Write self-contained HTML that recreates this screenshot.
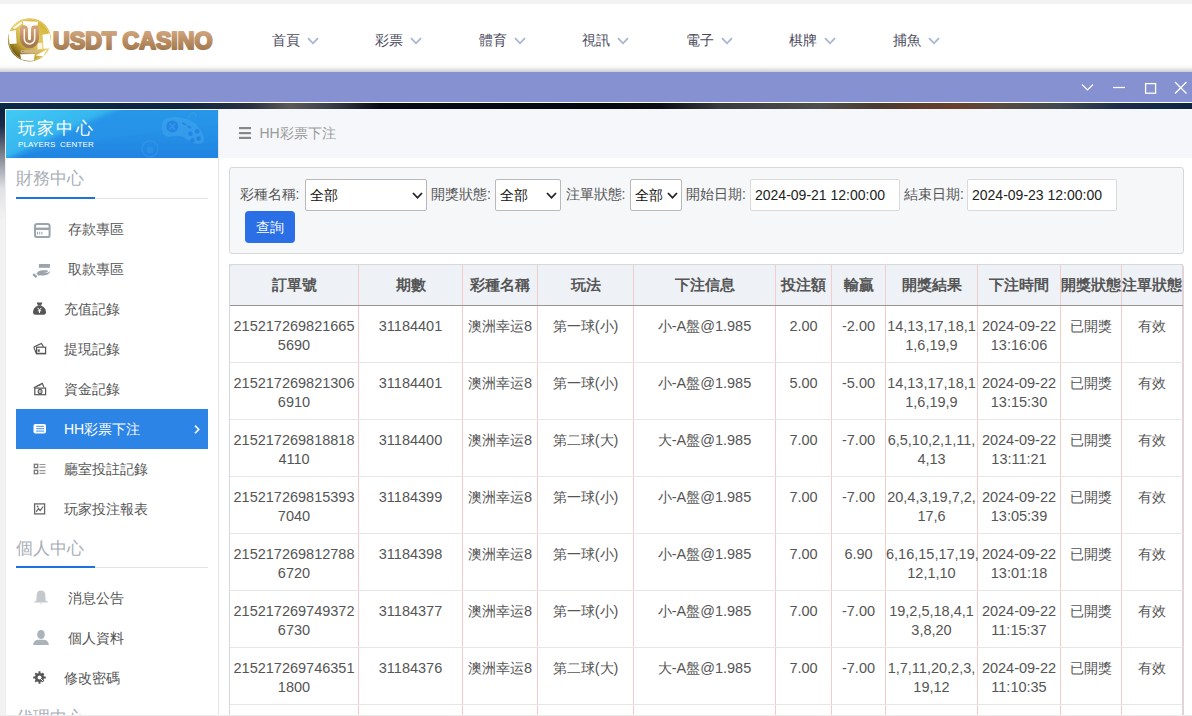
<!DOCTYPE html>
<html><head><meta charset="utf-8">
<style>
*{box-sizing:border-box}
html,body{margin:0;padding:0}
body{width:1192px;height:716px;overflow:hidden;position:relative;background:#fff;font-family:"Liberation Sans",sans-serif;color:#555}
.a{position:absolute}
#topstrip{left:0;top:0;width:1192px;height:4px;background:#f3f3f3}
#header{left:0;top:4px;width:1192px;height:62px;background:#fff}
#hshadow{left:0;top:65px;width:1192px;height:7px;background:linear-gradient(#fff 0%,#f7f7f7 35%,#e2e2e2 65%,#cfcfcd 100%)}
#pbar{left:0;top:72px;width:1192px;height:30px;background:#8591d0}
#wline{left:0;top:101.5px;width:1192px;height:1.5px;background:#fff}
#dstrip{left:0;top:103px;width:1192px;height:6px;background:linear-gradient(90deg,#0b2a48 0px,#0e2640 180px,#2a3040 250px,#5a5a58 290px,#3a4048 330px,#060b16 380px,#04080f 600px,#0a0e14 660px,#383a3c 720px,#4e4e4c 820px,#4a3a32 880px,#5e3c2e 920px,#684030 960px,#584a40 1000px,#404850 1060px,#1e2c4a 1120px,#0c2440 1192px)}
.nav{top:32.4px;font-size:14px;color:#4a4a5e;white-space:nowrap}
.nav svg{position:absolute;left:35px;top:4.6px}
#leftbg{left:0;top:109px;width:5px;height:607px;background:linear-gradient(#0c2440 0px,#182a48 16px,#6a7282 40px,#a8acb6 60px,#e2e2e6 80px,#f2f2f2 110px,#f2f2f2 100%)}
#panel{left:5px;top:109px;width:214px;height:607px;background:#fff;border-left:1px solid #eee;border-top:1px solid #f4f4f4;border-right:1px solid #e6e6e6}
#phead{left:6px;top:110px;width:212px;height:48px;background:linear-gradient(180deg,#2796e8 0%,#2590e6 50%,#2084e2 100%);overflow:hidden}
.sec{left:16px;font-size:17px;color:#a8aeb6;white-space:nowrap}
.secline{left:16px;width:192px;height:1px;background:#e3e3e3}
.secblue{left:16px;width:79px;height:2px;background:#1a73e0}
.mi{font-size:14px;color:#555;white-space:nowrap}
.ico{position:absolute}
#rtop{left:219px;top:109px;width:973px;height:49px;background:#f5f7fa}
#filter{left:229px;top:167px;width:955px;height:87px;background:#f6f7f9;border:1px solid #d5d8dc;border-radius:3px}
.lbl{font-size:14px;color:#555;white-space:nowrap;top:186px}
.sel{top:179px;height:32px;background:#fff;border:1px solid #b9b9b9;border-radius:2px;font-size:14px;color:#111}
.sel span{position:absolute;left:4px;top:7px}
.sel svg{position:absolute;top:12px}
.inp{top:179px;height:32px;background:#fff;border:1px solid #dadada;border-radius:2px;font-size:14px;color:#222}
.inp span{position:absolute;left:4px;top:7px}
#btn{left:245px;top:211px;width:50px;height:32px;background:#2a6fe6;border-radius:4px;color:#fff;font-size:14px;text-align:center;line-height:32px}
#tbl{left:229px;top:264px;width:954px;border-collapse:collapse;table-layout:fixed;border-left:1px solid #c9ced6;border-top:1px solid #dfe3e8;border-radius:4px 4px 0 0}
#tbl th{height:41px;background:#eef2f6;font-size:15px;font-weight:bold;color:#555;border-right:1px solid #f3cccc;border-bottom:1px solid #9b9292;padding:0;white-space:nowrap;text-align:center}
#tbl td .c{font-size:14px}
#tbl td{height:57px;font-size:14.5px;color:#555;border-right:1px solid #f3cccc;border-bottom:1px solid #e6e6e6;padding:0;text-align:center;vertical-align:top;line-height:19px;padding-top:11px;white-space:nowrap}
</style></head><body>
<div id="topstrip" class="a"></div>
<div id="header" class="a"></div>
<div id="hshadow" class="a"></div>
<div id="pbar" class="a"></div>
<div id="wline" class="a"></div>
<div id="dstrip" class="a"></div>

<!-- logo -->
<svg class="a" style="left:0;top:0" width="230" height="70" viewBox="0 0 230 70">
<defs>
<linearGradient id="tg" x1="0" y1="0" x2="0" y2="1"><stop offset="0" stop-color="#d9ad84"/><stop offset="1" stop-color="#9a7046"/></linearGradient>
<linearGradient id="ug" x1="0" y1="0" x2="0" y2="1"><stop offset="0" stop-color="#d2a47c"/><stop offset="1" stop-color="#a47850"/></linearGradient>
<linearGradient id="gold" x1="0.85" y1="0.1" x2="0.15" y2="0.9"><stop offset="0" stop-color="#d4b232"/><stop offset="0.45" stop-color="#e4cc68"/><stop offset="0.7" stop-color="#c8a838"/><stop offset="1" stop-color="#5e4608"/></linearGradient>
</defs>
<circle cx="29.5" cy="39.8" r="21.6" fill="url(#gold)"/>
<circle cx="29.5" cy="39.8" r="20.6" fill="none" stroke="#f4e6a8" stroke-width="0.6" opacity="0.8"/>
<path d="M22.8 21 L38.2 21.7 L37.5 25.4 L28.1 26.4 L23.4 25 Z" fill="#fff"/>
<path d="M12.7 28.1 L21.4 21.4 L22.4 23.4 L14.7 29.1 Z" fill="#fff" opacity="0.9"/>
<path d="M9 31.4 L15.7 30.1 L16.7 43.5 L9.7 44.1 Q8.3 37.5 9 31.4 Z" fill="#fff"/>
<path d="M20.1 54.2 L34.8 53.9 L33.8 60.2 Q27.5 61.5 21.4 59.6 Z" fill="#fff"/>
<path d="M35.5 55.5 L46.9 49.5 L43.5 56.2 Z" fill="#fff"/>
<path d="M42.5 34.8 L49.6 33.4 Q51.3 40.5 50.9 48.2 L43.5 48.8 Z" fill="#fff"/>
<path d="M37.5 43.5 L42.2 42.8 L42.5 48.8 L37.5 49.5 Z" fill="#fff" opacity="0.8"/>
<rect x="27" y="24" width="5" height="16" rx="2" fill="#fffaf0"/>
<path d="M24 29.5 V38.7 A5.5 5.5 0 0 0 35 38.7 V29.5" fill="none" stroke="url(#ug)" stroke-width="8" stroke-linecap="round"/>
<path d="M24.3 29.5 V38.7 A5.2 5.2 0 0 0 34.7 38.7 V29.5" fill="none" stroke="#fff6ea" stroke-width="1.5" stroke-linecap="round"/>
<text x="29.5" y="53.2" font-size="5" fill="#f4ece4" stroke="#caa890" stroke-width="0.35" text-anchor="middle" font-family="Liberation Sans" textLength="17.5" lengthAdjust="spacingAndGlyphs">casino</text>
<text x="53" y="48.8" font-family="Liberation Sans" font-weight="bold" font-size="23.2" fill="url(#tg)" stroke="url(#tg)" stroke-width="2.1" stroke-linejoin="round" textLength="159.5" lengthAdjust="spacingAndGlyphs">USDT CASINO</text>
</svg>
<!-- nav -->
<div class="a nav" style="left:271.5px">首頁<svg width="12" height="8" viewBox="0 0 12 8"><path d="M1 1.2 L6 6.3 L11 1.2" fill="none" stroke="#a9b3d3" stroke-width="1.8"/></svg></div>
<div class="a nav" style="left:375px">彩票<svg width="12" height="8" viewBox="0 0 12 8"><path d="M1 1.2 L6 6.3 L11 1.2" fill="none" stroke="#a9b3d3" stroke-width="1.8"/></svg></div>
<div class="a nav" style="left:478.5px">體育<svg width="12" height="8" viewBox="0 0 12 8"><path d="M1 1.2 L6 6.3 L11 1.2" fill="none" stroke="#a9b3d3" stroke-width="1.8"/></svg></div>
<div class="a nav" style="left:582px">視訊<svg width="12" height="8" viewBox="0 0 12 8"><path d="M1 1.2 L6 6.3 L11 1.2" fill="none" stroke="#a9b3d3" stroke-width="1.8"/></svg></div>
<div class="a nav" style="left:685.5px">電子<svg width="12" height="8" viewBox="0 0 12 8"><path d="M1 1.2 L6 6.3 L11 1.2" fill="none" stroke="#a9b3d3" stroke-width="1.8"/></svg></div>
<div class="a nav" style="left:789px">棋牌<svg width="12" height="8" viewBox="0 0 12 8"><path d="M1 1.2 L6 6.3 L11 1.2" fill="none" stroke="#a9b3d3" stroke-width="1.8"/></svg></div>
<div class="a nav" style="left:892.5px">捕魚<svg width="12" height="8" viewBox="0 0 12 8"><path d="M1 1.2 L6 6.3 L11 1.2" fill="none" stroke="#a9b3d3" stroke-width="1.8"/></svg></div>

<!-- window controls -->
<svg class="a" style="left:1070px;top:76px" width="122" height="24" viewBox="0 0 122 24">
<path d="M12 8.5 L17.5 14 L23 8.5" fill="none" stroke="#fff" stroke-width="1.2"/>
<path d="M43 11.5 H55" stroke="#fff" stroke-width="1.3"/>
<rect x="75.6" y="7.6" width="10" height="9.6" fill="none" stroke="#fff" stroke-width="1.3"/>
<path d="M105 6 L116.5 17.5 M116.5 6 L105 17.5" stroke="#fff" stroke-width="1.3"/>
</svg>

<!-- left -->
<div id="leftbg" class="a"></div>
<div id="panel" class="a"></div>
<div id="phead" class="a">
<svg class="a" style="left:0;top:0" width="212" height="48" viewBox="6 110 212 48">
<defs><filter id="bl" x="-20%" y="-20%" width="140%" height="140%"><feGaussianBlur stdDeviation="2.5"/></filter><linearGradient id="cy" x1="0" y1="0" x2="1" y2="1"><stop offset="0" stop-color="#44cff4"/><stop offset="0.6" stop-color="#32aeee"/><stop offset="1" stop-color="#2a9cea"/></linearGradient></defs><path d="M0 104 L128 104 Q62 133 0 163 Z" fill="url(#cy)" filter="url(#bl)"/><path d="M124 110 L218 110 L218 125 Q170 126 6 158 Q60 135 124 110 Z" fill="#2898ea" opacity="0.35"/>
<path d="M161.7 128.4 Q162 119.5 166 118.6 Q171 116.5 175.3 117 Q182 117.5 187.4 119.3 Q194 122 198 126.9 Q203 132 204 138.2 Q204 143.5 201 143.5 Q197 144 192.7 142.7 Q188 140 182.9 136.7 Q176 135 169.3 136.7 Q165 136.5 163.2 133.7 Z" fill="#48aaf0" opacity="0.45"/>
<circle cx="172.3" cy="126.5" r="6" fill="#1e7ee2" opacity="0.75"/>
<path d="M169.5 123.5 L175 129.5 M175 123.5 L169.5 129.5" stroke="#3c9cee" stroke-width="1.6" opacity="0.7"/>
<path d="M182.1 122.7 L185.9 125 M187.4 126.1 L191.2 128" stroke="#1e7ee2" stroke-width="1.8" opacity="0.8"/>
<circle cx="190.4" cy="133.7" r="2.3" fill="#1e7ee2" opacity="0.75"/>
<circle cx="197.2" cy="131.4" r="2.3" fill="#1e7ee2" opacity="0.75"/>
<circle cx="192.3" cy="140.5" r="2.3" fill="#1e7ee2" opacity="0.75"/>
<circle cx="198.7" cy="138.6" r="2.3" fill="#1e7ee2" opacity="0.75"/>
<path d="M188.2 117.8 Q190 113 194.2 112.8 Q196 114 195.7 117" fill="none" stroke="#48aaf0" stroke-width="1" opacity="0.5"/>
<circle cx="150" cy="148.8" r="8" fill="none" stroke="#40a4ee" stroke-width="1.6" opacity="0.35"/>
<circle cx="150" cy="150" r="3.5" fill="#40a4ee" opacity="0.3"/>
</svg>
</div>
<div class="a" style="left:18px;top:117px;font-size:16.8px;letter-spacing:2.2px;color:#fff;white-space:nowrap">玩家中心</div>
<div class="a" style="left:18px;top:139.5px;font-size:8px;color:#fff;white-space:nowrap;letter-spacing:0.15px">PLAYERS&nbsp; CENTER</div>

<div class="a sec" style="top:167px">財務中心</div>
<div class="a secline" style="top:198px"></div>
<div class="a secblue" style="top:197px"></div>

<div class="a mi" style="left:68px;top:221px">存款專區</div>
<div class="a mi" style="left:68px;top:261px">取款專區</div>
<div class="a mi" style="left:64px;top:301px">充值記錄</div>
<div class="a mi" style="left:64px;top:341px">提現記錄</div>
<div class="a mi" style="left:64px;top:381px">資金記錄</div>
<div class="a" style="left:16px;top:409px;width:192px;height:40px;background:#2b84e6"></div>
<div class="a mi" style="left:64px;top:421px;color:#fff">HH彩票下注</div>
<div class="a mi" style="left:64px;top:461px">廳室投註記錄</div>
<div class="a mi" style="left:64px;top:501px">玩家投注報表</div>

<div class="a sec" style="top:537px">個人中心</div>
<div class="a secline" style="top:567px"></div>
<div class="a secblue" style="top:566px"></div>
<div class="a mi" style="left:68px;top:590px">消息公告</div>
<div class="a mi" style="left:68px;top:630px">個人資料</div>
<div class="a mi" style="left:64px;top:670px">修改密碼</div>
<div class="a sec" style="top:706px">代理中心</div>

<!-- icons -->
<svg class="a" style="left:33px;top:221px" width="18" height="18" viewBox="0 0 18 18"><rect x="2" y="2.9" width="14.6" height="13.2" rx="2.2" fill="none" stroke="#9aa4ad" stroke-width="2"/><rect x="2" y="6.6" width="14.6" height="2.4" fill="#9aa4ad"/><path d="M4.5 10.8 V13.5 M6.7 10.8 V13.5 M8.9 10.8 V13.5" stroke="#9aa4ad" stroke-width="1"/></svg>
<svg class="a" style="left:32px;top:262px" width="20" height="16" viewBox="0 0 20 16"><rect x="6.9" y="2" width="11" height="3.8" fill="#9aa4ad"/><path d="M4.5 11.5 Q7 8 11 8.3 L15.5 8.3 Q16.5 9.5 15 10.3 L11 10.5 L15.5 10.7 Q17.5 10 18.2 8.4 Q18.4 10.8 15.5 12.6 Q12 14.2 8 13.2 L6.5 13.8 Z" fill="#9aa4ad"/><path d="M1.2 12.2 L4.6 15.2" stroke="#9aa4ad" stroke-width="2.4"/></svg>
<svg class="a" style="left:32px;top:301px" width="16" height="16" viewBox="0 0 16 16"><path d="M4.5 1.5 L10.5 1.5 L9 4.5 L6 4.5 Z" fill="#555"/><path d="M6 4.5 L9 4.5 Q14 6.5 14 11.5 Q14 13.8 11.5 13.8 L3.5 13.8 Q1 13.8 1 11.5 Q1 6.5 6 4.5 Z" fill="#555"/><path d="M5.6 6.8 L7.5 9 L9.4 6.8 M7.5 9 V12 M5.8 9.8 H9.2" fill="none" stroke="#fff" stroke-width="1"/></svg>
<svg class="a" style="left:32px;top:341px" width="16" height="16" viewBox="0 0 16 16"><path d="M1.8 6.1 L9.4 2.4 L11.4 5.6" fill="none" stroke="#555" stroke-width="1.15"/><path d="M1.8 6.1 L4.4 12.8" stroke="#555" stroke-width="1.15"/><rect x="4.6" y="6.2" width="9" height="6.6" fill="none" stroke="#555" stroke-width="1.2"/><rect x="5.8" y="8.4" width="2" height="2.3" fill="#555"/><path d="M4.6 12.4 H13.6" stroke="#555" stroke-width="1.2"/></svg>
<svg class="a" style="left:32px;top:381px" width="16" height="16" viewBox="0 0 16 16"><path d="M1.8 6.8 L10.3 2.2 L12 6.4" fill="none" stroke="#555" stroke-width="1.15"/><path d="M4.5 5.6 L9.5 3.4" stroke="#555" stroke-width="0.9"/><rect x="2.8" y="7.1" width="10.8" height="6.6" fill="none" stroke="#555" stroke-width="1.2"/><ellipse cx="8.1" cy="10.4" rx="1.9" ry="2.1" fill="none" stroke="#555" stroke-width="1.1"/><path d="M8.1 9.2 V11.6" stroke="#555" stroke-width="0.8"/></svg>
<svg class="a" style="left:32px;top:422px" width="16" height="14" viewBox="0 0 16 14"><rect x="1.5" y="2" width="12.5" height="9.5" rx="1.8" fill="#fff"/><path d="M4.2 4.3 H12.2 M4.2 6.7 H12.2 M4.2 9.1 H12.2" stroke="#2b84e6" stroke-width="0.9"/></svg>
<svg class="a" style="left:32px;top:462px" width="16" height="14" viewBox="0 0 16 14"><rect x="2.3" y="2.3" width="3.4" height="3.4" fill="none" stroke="#777" stroke-width="1.3"/><rect x="2.3" y="8.3" width="3.4" height="3.4" fill="none" stroke="#777" stroke-width="1.3"/><path d="M7.5 2.5 H13.5 M7.5 5.2 H13.5 M7.5 8.6 H13.5 M7.5 11.4 H13.5" stroke="#999" stroke-width="1.2"/></svg>
<svg class="a" style="left:32px;top:502px" width="16" height="14" viewBox="0 0 16 14"><rect x="2.6" y="1.9" width="10" height="10" fill="none" stroke="#666" stroke-width="1.3"/><path d="M4.2 9.8 L6.5 6.5 L8.2 8.5 L11.2 4.5" fill="none" stroke="#666" stroke-width="1.2"/><circle cx="5.6" cy="4.5" r="0.9" fill="#666"/></svg>
<svg class="a" style="left:32px;top:589px" width="18" height="17" viewBox="0 0 18 17"><path d="M9 1.5 Q13.2 1.5 13.4 6.5 L13.6 11.5 L16.5 13.5 L1.5 13.5 L4.4 11.5 L4.6 6.5 Q4.8 1.5 9 1.5 Z" fill="#c4c9ce"/><path d="M7.8 14.5 L10.2 14.5 L9 15.6 Z" fill="#c4c9ce"/></svg>
<svg class="a" style="left:32px;top:629px" width="18" height="17" viewBox="0 0 18 17"><ellipse cx="9" cy="5.5" rx="3.8" ry="4.6" fill="#aab2ba"/><path d="M1.2 16 Q1.2 11.5 6 10.8 L12 10.8 Q16.8 11.5 16.8 16 Z" fill="#aab2ba"/></svg>
<svg class="a" style="left:32px;top:670px" width="16" height="16" viewBox="0 0 16 16"><g fill="#555"><circle cx="7.5" cy="7.5" r="4.6"/><path d="M6.5 1.2 H8.5 V3.5 H6.5 Z M6.5 11.5 H8.5 V13.8 H6.5 Z M1.2 6.5 V8.5 H3.5 V6.5 Z M11.5 6.5 V8.5 H13.8 V6.5 Z"/><path d="M2.6 3.9 L3.9 2.6 L5.6 4.3 L4.3 5.6 Z M11.1 9.4 L12.4 10.7 L10.7 12.4 L9.4 11.1 Z M2.6 11.1 L3.9 12.4 L5.6 10.7 L4.3 9.4 Z M11.1 5.6 L12.4 4.3 L10.7 2.6 L9.4 3.9 Z"/></g><circle cx="7.5" cy="7.5" r="2" fill="#fff"/><path d="M8.8 8.8 L11.5 11.5" stroke="#fff" stroke-width="1"/></svg>
<svg class="a" style="left:192px;top:423.5px" width="10" height="12" viewBox="0 0 10 12"><path d="M3 1.6 L6.8 5.4 L3 9.2" fill="none" stroke="#fff" stroke-width="1.6"/></svg>
<!-- right -->
<div id="rtop" class="a"></div>
<svg class="a" style="left:238px;top:126px" width="14" height="15" viewBox="0 0 14 15"><rect x="1" y="1" width="12" height="2.2" fill="#888"/><rect x="1" y="6" width="12" height="2.2" fill="#888"/><rect x="1" y="10.8" width="12" height="2.2" fill="#888"/></svg>
<div class="a" style="left:259.5px;top:125px;font-size:14px;color:#999;white-space:nowrap">HH彩票下注</div>

<div id="filter" class="a"></div>
<div class="a lbl" style="left:239.5px">彩種名稱:</div>
<div class="a sel" style="left:305px;width:122px"><span>全部</span><svg style="left:106px" width="11" height="8" viewBox="0 0 11 8"><path d="M1 1 L5.5 5.8 L10 1" fill="none" stroke="#222" stroke-width="1.8"/></svg></div>
<div class="a lbl" style="left:431px">開獎狀態:</div>
<div class="a sel" style="left:495px;width:66px"><span>全部</span><svg style="left:50px" width="11" height="8" viewBox="0 0 11 8"><path d="M1 1 L5.5 5.8 L10 1" fill="none" stroke="#222" stroke-width="1.8"/></svg></div>
<div class="a lbl" style="left:565.5px">注單狀態:</div>
<div class="a sel" style="left:630px;width:52px"><span>全部</span><svg style="left:36px" width="11" height="8" viewBox="0 0 11 8"><path d="M1 1 L5.5 5.8 L10 1" fill="none" stroke="#222" stroke-width="1.8"/></svg></div>
<div class="a lbl" style="left:686px">開始日期:</div>
<div class="a inp" style="left:750px;width:150px"><span>2024-09-21 12:00:00</span></div>
<div class="a lbl" style="left:904px">結束日期:</div>
<div class="a inp" style="left:967px;width:150px"><span>2024-09-23 12:00:00</span></div>
<div id="btn" class="a">查詢</div>

<!-- TABLE -->
<table id="tbl" class="a"><colgroup>
<col style="width:129px">
<col style="width:104px">
<col style="width:75px">
<col style="width:96px">
<col style="width:142px">
<col style="width:56px">
<col style="width:54px">
<col style="width:92px">
<col style="width:83px">
<col style="width:61px">
<col style="width:61px">
</colgroup><tr>
<th>訂單號</th>
<th>期數</th>
<th>彩種名稱</th>
<th>玩法</th>
<th>下注信息</th>
<th>投注額</th>
<th>輸贏</th>
<th>開獎結果</th>
<th>下注時間</th>
<th>開獎狀態</th>
<th>注單狀態</th>
</tr>
<tr><td>215217269821665<br>5690</td><td>31184401</td><td><span class="c">澳洲幸运</span>8</td><td><span class="c">第一球</span>(<span class="c">小</span>)</td><td><span class="c">小</span>-A<span class="c">盤</span>@1.985</td><td>2.00</td><td>-2.00</td><td>14,13,17,18,1<br>1,6,19,9</td><td>2024-09-22<br>13:16:06</td><td><span class="c">已開獎</span></td><td><span class="c">有效</span></td></tr>
<tr><td>215217269821306<br>6910</td><td>31184401</td><td><span class="c">澳洲幸运</span>8</td><td><span class="c">第一球</span>(<span class="c">小</span>)</td><td><span class="c">小</span>-A<span class="c">盤</span>@1.985</td><td>5.00</td><td>-5.00</td><td>14,13,17,18,1<br>1,6,19,9</td><td>2024-09-22<br>13:15:30</td><td><span class="c">已開獎</span></td><td><span class="c">有效</span></td></tr>
<tr><td>215217269818818<br>4110</td><td>31184400</td><td><span class="c">澳洲幸运</span>8</td><td><span class="c">第二球</span>(<span class="c">大</span>)</td><td><span class="c">大</span>-A<span class="c">盤</span>@1.985</td><td>7.00</td><td>-7.00</td><td>6,5,10,2,1,11,<br>4,13</td><td>2024-09-22<br>13:11:21</td><td><span class="c">已開獎</span></td><td><span class="c">有效</span></td></tr>
<tr><td>215217269815393<br>7040</td><td>31184399</td><td><span class="c">澳洲幸运</span>8</td><td><span class="c">第一球</span>(<span class="c">小</span>)</td><td><span class="c">小</span>-A<span class="c">盤</span>@1.985</td><td>7.00</td><td>-7.00</td><td>20,4,3,19,7,2,<br>17,6</td><td>2024-09-22<br>13:05:39</td><td><span class="c">已開獎</span></td><td><span class="c">有效</span></td></tr>
<tr><td>215217269812788<br>6720</td><td>31184398</td><td><span class="c">澳洲幸运</span>8</td><td><span class="c">第一球</span>(<span class="c">小</span>)</td><td><span class="c">小</span>-A<span class="c">盤</span>@1.985</td><td>7.00</td><td>6.90</td><td>6,16,15,17,19,<br>12,1,10</td><td>2024-09-22<br>13:01:18</td><td><span class="c">已開獎</span></td><td><span class="c">有效</span></td></tr>
<tr><td>215217269749372<br>6730</td><td>31184377</td><td><span class="c">澳洲幸运</span>8</td><td><span class="c">第一球</span>(<span class="c">小</span>)</td><td><span class="c">小</span>-A<span class="c">盤</span>@1.985</td><td>7.00</td><td>-7.00</td><td>19,2,5,18,4,1<br>3,8,20</td><td>2024-09-22<br>11:15:37</td><td><span class="c">已開獎</span></td><td><span class="c">有效</span></td></tr>
<tr><td>215217269746351<br>1800</td><td>31184376</td><td><span class="c">澳洲幸运</span>8</td><td><span class="c">第二球</span>(<span class="c">大</span>)</td><td><span class="c">大</span>-A<span class="c">盤</span>@1.985</td><td>7.00</td><td>-7.00</td><td>1,7,11,20,2,3,<br>19,12</td><td>2024-09-22<br>11:10:35</td><td><span class="c">已開獎</span></td><td><span class="c">有效</span></td></tr>
<tr><td>&nbsp;</td><td></td><td></td><td></td><td></td><td></td><td></td><td></td><td></td><td></td><td></td></tr>
</table>
<div class="a" style="left:229px;top:264px;width:955px;height:460px;border:1px solid #d4d9df;border-bottom:none;border-radius:4px 4px 0 0"></div>
<div class="a" style="left:0;top:715px;width:1192px;height:1px;background:#ebebeb"></div>
</body></html>
